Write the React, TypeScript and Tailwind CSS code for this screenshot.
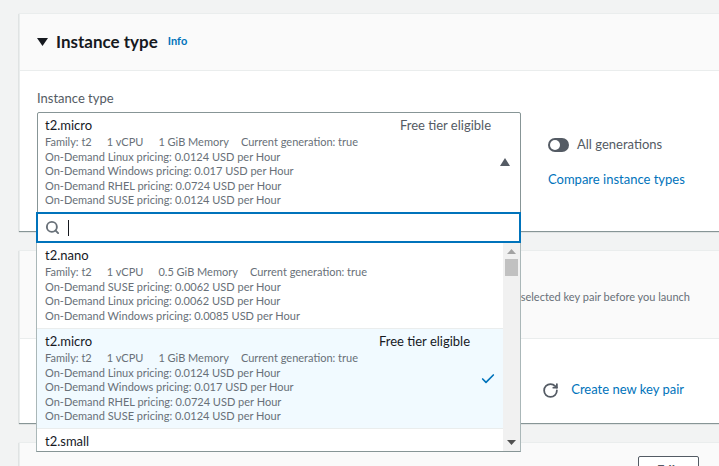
import { Check, RotateCw, Search } from "lucide-react";

const font = "font-['Lato',sans-serif]";

type Opt = {
  name: string;
  memory: string;
  lines: string[];
  free?: boolean;
};

const nano: Opt = {
  name: "t2.nano",
  memory: "0.5 GiB Memory",
  lines: [
    "On-Demand SUSE pricing: 0.0062 USD per Hour",
    "On-Demand Linux pricing: 0.0062 USD per Hour",
    "On-Demand Windows pricing: 0.0085 USD per Hour",
  ],
};

const micro: Opt = {
  name: "t2.micro",
  memory: "1 GiB Memory",
  free: true,
  lines: [
    "On-Demand Linux pricing: 0.0124 USD per Hour",
    "On-Demand Windows pricing: 0.017 USD per Hour",
    "On-Demand RHEL pricing: 0.0724 USD per Hour",
    "On-Demand SUSE pricing: 0.0124 USD per Hour",
  ],
};

const Meta = ({ o }: { o: Opt }) => (
  <div className="flex h-[16px] items-center gap-[15px] text-[11px] leading-[16px]">
    <span>Family: t2</span>
    <span>1 vCPU</span>
    <span>{o.memory}</span>
    <span className="ml-[-3px]">Current generation: true</span>
  </div>
);

const Lines = ({ o }: { o: Opt }) => (
  <div className="text-[11px] leading-[14.4px]">
    {o.lines.map((l) => (
      <div key={l}>{l}</div>
    ))}
  </div>
);

const Option = ({ o, selected }: { o: Opt; selected?: boolean }) => (
  <div
    className={`relative border-b border-[#eaeded] pl-[8px] pt-[4px] text-[#687078] ${
      selected ? "h-[100px] bg-[#f1faff]" : "h-[86px] bg-white"
    }`}
  >
    <div className="flex h-[17px] items-center justify-between pr-[33px] text-[13px] text-[#16191f]">
      <span>{o.name}</span>
      {o.free && <span>Free tier eligible</span>}
    </div>
    <Meta o={o} />
    <Lines o={o} />
    {selected && (
      <Check className="absolute right-[7px] top-[42px] h-[16px] w-[16px] text-[#0073bb]" strokeWidth={2.5} />
    )}
  </div>
);

const Card = ({ className, children }: { className: string; children: React.ReactNode }) => (
  <div className={`border-l border-t border-[#eaeded] bg-white shadow-[0_1px_1px_0_#879596] ${className}`}>
    {children}
  </div>
);

export default function App() {
  return (
    <div className={`${font} h-[466px] w-[719px] overflow-hidden bg-[#f2f3f3] pl-[19px] pt-[13px]`}>
      <Card className="h-[218px]">
        <div className="flex h-[57px] items-center gap-[8px] border-b border-[#eaeded] bg-[#fafafa] pb-[1px] pl-[17px]">
          <svg width="11" height="8" viewBox="0 0 11 8" className="text-[#16191f]">
            <path d="M0 0h11L5.5 8z" fill="currentColor" />
          </svg>
          <span className="text-[17px] font-bold text-[#16191f]">Instance type</span>
          <span className="ml-[2px] text-[11px] font-bold text-[#0073bb]">Info</span>
        </div>
        <div className="flex">
          <div className="relative ml-[17px] mt-[17px] w-[484px]">
            <div className="h-[24px] text-[13px] leading-[20px] text-[#545b64]">Instance type</div>
            <div className="h-[104px] rounded-[2px] border border-[#879596] pl-[7px] pt-[4px] text-[#687078]">
              <div className="flex h-[17px] items-center justify-between pr-[29px] text-[13px]">
                <span className="text-[#16191f]">{micro.name}</span>
                <span className="text-[#545b64]">Free tier eligible</span>
              </div>
              <Meta o={micro} />
              <Lines o={micro} />
            </div>
            <svg width="10" height="8" viewBox="0 0 10 8" className="absolute left-[463px] top-[70px] text-[#545b64]">
              <path d="M5 0l5 8H0z" fill="currentColor" />
            </svg>

            {/* open dropdown lies over the cards below */}
            <div className="absolute left-[-1px] top-[124px] z-10 w-[485px]">
              <div className="flex h-[31px] items-center gap-[8px] border-2 border-[#0073bb] bg-white pl-[7px]">
                <Search className="h-[15px] w-[15px] text-[#687078]" strokeWidth={3} />
                <div className="h-[16px] w-px bg-[#16191f]" />
              </div>
              <div className="flex h-[209px] border-b border-l border-r border-[#aab7b8] border-b-[#879596] bg-white">
                <div className="w-[467px] overflow-hidden">
                  <Option o={nano} />
                  <Option o={micro} selected />
                  <div className="pl-[8px] pt-[4px] text-[13px] leading-[17px] text-[#16191f]">t2.small</div>
                </div>
                <div className="relative w-[17px] bg-[#f1f1f1]">
                  <svg width="9" height="5" viewBox="0 0 9 5" className="absolute left-[4px] top-[6px] text-[#a3a3a3]">
                    <path d="M4.5 0L9 5H0z" fill="currentColor" />
                  </svg>
                  <div className="absolute left-[2px] top-[16px] h-[17px] w-[13px] bg-[#c1c1c1]" />
                  <svg width="9" height="5" viewBox="0 0 9 5" className="absolute bottom-[6px] left-[4px] text-[#505050]">
                    <path d="M0 0h9L4.5 5z" fill="currentColor" />
                  </svg>
                </div>
              </div>
            </div>
          </div>
          <div className="ml-[27px] mt-[65px]">
            <div className="flex h-[18px] items-center gap-[8px]">
              <div className="flex h-[14px] w-[21px] items-center rounded-full bg-[#545b64] pl-[2px]">
                <div className="h-[10px] w-[10px] rounded-full bg-white" />
              </div>
              <span className="text-[13px] text-[#545b64]">All generations</span>
            </div>
            <div className="mt-[16px] text-[13px] text-[#0073bb]">Compare instance types</div>
          </div>
        </div>
      </Card>

      <Card className="mt-[19px] h-[173px]">
        <div className="flex h-[88px] items-center justify-end border-b border-[#eaeded] bg-[#fafafa] pr-[29px] pt-[6px] text-[11px] text-[#687078]">
          selected key pair before you launch
        </div>
        <div className="flex h-[85px] items-center justify-end gap-[12px] pr-[35px] pt-[17px]">
          <RotateCw className="h-[17px] w-[17px] text-[#545b64]" strokeWidth={2.5} />
          <span className="text-[13px] text-[#0073bb]">Create new key pair</span>
        </div>
      </Card>

      <Card className="mt-[19px] h-[60px]">
        <div className="flex h-[60px] items-start justify-between bg-[#fafafa] pl-[17px] pr-[20px] pt-[13px]">
          <div className="mt-[5px] flex items-center gap-[8px]">
            <svg width="11" height="8" viewBox="0 0 11 8" className="text-[#16191f]">
              <path d="M0 0h11L5.5 8z" fill="currentColor" />
            </svg>
            <span className="text-[17px] font-bold text-[#16191f]">Network settings</span>
          </div>
          <div className="w-[61px] rounded-[2px] border border-[#545b64] bg-white text-center text-[13px] font-bold leading-[26px] text-[#545b64]">
            Edit
          </div>
        </div>
      </Card>
    </div>
  );
}
